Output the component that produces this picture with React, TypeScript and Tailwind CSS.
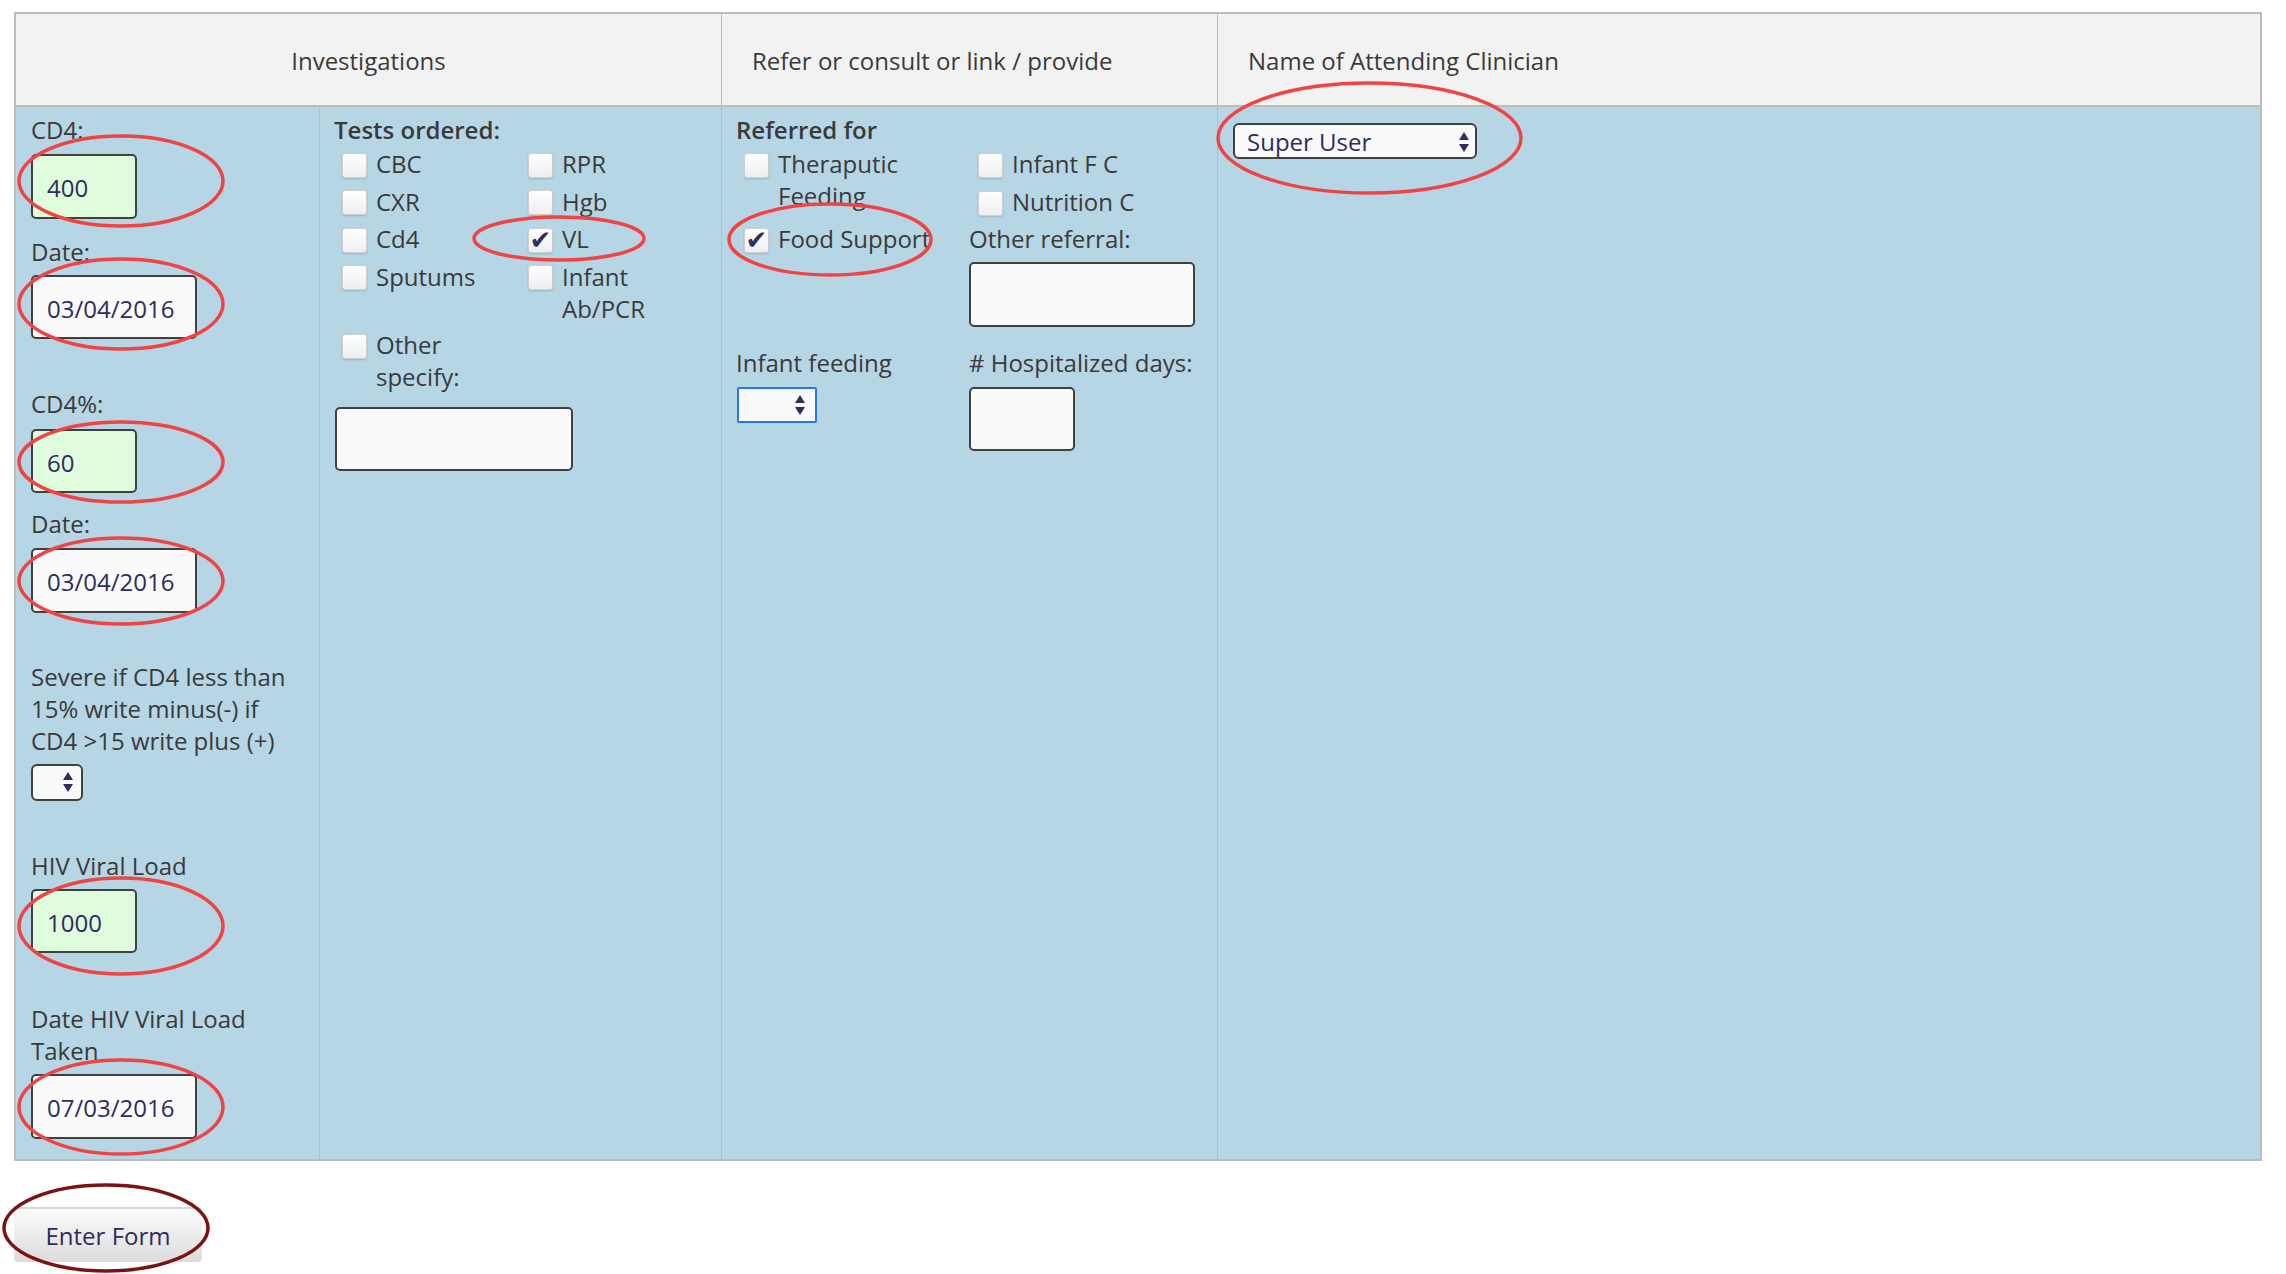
import React from "react";

const LABEL = "text-[24px] leading-[32px] text-[#3a3a3a]";

function Arrows() {
  return (
    <svg width="10" height="20" viewBox="0 0 10 20" className="shrink-0">
      <polygon points="5,0 10,8 0,8" fill="#2f2d63" />
      <polygon points="0,12 10,12 5,20" fill="#2f2d63" />
    </svg>
  );
}

function Box({ checked = false }: { checked?: boolean }) {
  return (
    <div className="mt-[4.5px] w-[25px] h-[25px] shrink-0 rounded-[3px] border border-[#cfcfcf] bg-gradient-to-b from-white to-[#eeeeee] shadow-[0_1px_2px_rgba(0,0,0,0.15)] flex items-center justify-center">
      {checked && (
        <span className="text-[#2f2d63] text-[26px] leading-none" style={{ fontFamily: "'DejaVu Sans', sans-serif" }}>
          ✔
        </span>
      )}
    </div>
  );
}

function Check({ label, checked = false }: { label: React.ReactNode; checked?: boolean }) {
  return (
    <div className="flex items-start gap-[9px]">
      <Box checked={checked} />
      <span className={LABEL}>{label}</span>
    </div>
  );
}

function Field({ value, w, green = false, cls = "" }: { value?: string; w: string; green?: boolean; cls?: string }) {
  return (
    <div
      className={`${w} ${cls} border-2 border-[#404040] rounded-[5px] flex items-center pl-[14px] pt-[4px] text-[24px] text-[#2e2b5f] ${
        green ? "bg-[#dffcdd]" : "bg-[#fafafa]"
      }`}
    >
      {value}
    </div>
  );
}

export default function App() {
  return (
    <div className="relative w-[2286px] h-[1274px] bg-white overflow-hidden" style={{ fontFamily: "'Open Sans', Lato, sans-serif" }}>
      <div className="pt-[12px] pl-[14px]">
        <div className="w-[2248px] border-2 border-[#bcbcbc]">
          {/* header */}
          <div className="grid grid-cols-[706px_496px_1fr] h-[93px] bg-[#f2f2f2] border-b-2 border-[#bcbcbc] text-[24px] text-[#3a3a3a]">
            <div className="border-r border-[#bcbcbc] flex items-center justify-center pt-[2px]">Investigations</div>
            <div className="border-r border-[#bcbcbc] flex items-center pl-[30px] pt-[2px]">Refer or consult or link / provide</div>
            <div className="flex items-center pl-[30px] pt-[2px]">Name of Attending Clinician</div>
          </div>
          {/* body */}
          <div className="grid grid-cols-[304px_402px_496px_1fr] h-[1052px] bg-[#b6d5e5]">
            {/* col 1 */}
            <div className="border-r border-[#bcbcbc] pl-[15px] pt-[7px] flex flex-col items-start">
              <div className={LABEL}>CD4:</div>
              <Field value="400" w="w-[106px]" cls="h-[65px] mt-[7.5px]" green />
              <div className={`${LABEL} mt-[17.5px]`}>Date:</div>
              <Field value="03/04/2016" w="w-[166px]" cls="h-[64px] mt-[6.5px]" />
              <div className={`${LABEL} mt-[49.5px]`}>CD4%:</div>
              <Field value="60" w="w-[106px]" cls="h-[64px] mt-[8.5px]" green />
              <div className={`${LABEL} mt-[15.5px]`}>Date:</div>
              <Field value="03/04/2016" w="w-[166px]" cls="h-[65px] mt-[7.5px]" />
              <div className={`${LABEL} mt-[48.5px]`}>
                Severe if CD4 less than
                <br />
                15% write minus(-) if
                <br />
                CD4 &gt;15 write plus (+)
              </div>
              <div className="mt-[6.5px] w-[52px] h-[37px] border-2 border-[#404040] rounded-[6px] bg-[#fafafa] flex items-center justify-end pr-[8px]">
                <Arrows />
              </div>
              <div className={`${LABEL} mt-[49.5px]`}>HIV Viral Load</div>
              <Field value="1000" w="w-[106px]" cls="h-[64px] mt-[6.5px]" green />
              <div className={`${LABEL} mt-[50.5px]`}>
                Date HIV Viral Load
                <br />
                Taken
              </div>
              <Field value="07/03/2016" w="w-[166px]" cls="h-[65px] mt-[6.5px]" />
            </div>
            {/* col 2 */}
            <div className="border-r border-[#bcbcbc] pl-[14px] pt-[7px] flex flex-col items-start">
              <div className={`${LABEL} font-semibold`}>Tests ordered:</div>
              <div className="mt-[2px] pl-[8px] grid grid-cols-[186px_1fr] gap-y-[5.5px]">
                <Check label="CBC" />
                <Check label="RPR" />
                <Check label="CXR" />
                <Check label="Hgb" />
                <Check label="Cd4" />
                <Check label="VL" checked />
                <Check label="Sputums" />
                <Check
                  label={
                    <>
                      Infant
                      <br />
                      Ab/PCR
                    </>
                  }
                />
              </div>
              <div className="mt-[4.5px] pl-[8px]">
                <Check
                  label={
                    <>
                      Other
                      <br />
                      specify:
                    </>
                  }
                />
              </div>
              <Field w="w-[238px]" cls="h-[64px] mt-[13.5px] ml-[1px]" />
            </div>
            {/* col 3 */}
            <div className="border-r border-[#bcbcbc] pl-[14px] pt-[7px] flex flex-col items-start">
              <div className={`${LABEL} font-semibold`}>Referred for</div>
              <div className="mt-[2px] grid grid-cols-[233px_1fr]">
                <div className="pl-[8px] flex flex-col">
                  <div className="h-[62.5px] overflow-hidden">
                    <Check
                      label={
                        <>
                          Theraputic
                          <br />
                          Feeding
                        </>
                      }
                    />
                  </div>
                  <div className="mt-[12.5px] whitespace-nowrap">
                    <Check label="Food Support" checked />
                  </div>
                </div>
                <div className="flex flex-col items-start">
                  <div className="pl-[9px]">
                    <Check label="Infant F C" />
                  </div>
                  <div className="pl-[9px] mt-[6px]">
                    <Check label="Nutrition C" />
                  </div>
                  <div className={`${LABEL} mt-[5px]`}>Other referral:</div>
                  <Field w="w-[226px]" cls="h-[65px] mt-[6.5px]" />
                </div>
              </div>
              <div className="mt-[20.5px] grid grid-cols-[233px_1fr]">
                <div className="flex flex-col items-start">
                  <div className={LABEL}>Infant feeding</div>
                  <div className="mt-[7.5px] ml-[1px] w-[80px] h-[36px] border-2 border-[#2678f0] rounded-[2px] bg-[#fafafa] flex items-center justify-end pr-[10px]">
                    <Arrows />
                  </div>
                </div>
                <div className="flex flex-col items-start">
                  <div className={`${LABEL} whitespace-nowrap`}># Hospitalized days:</div>
                  <Field w="w-[106px]" cls="h-[64px] mt-[7.5px]" />
                </div>
              </div>
            </div>
            {/* col 4 */}
            <div className="pl-[15px] pt-[16px]">
              <div className="w-[244px] h-[36px] border-2 border-[#404040] rounded-[6px] bg-[#fafafa] flex items-center justify-between pl-[12px] pr-[6px] pt-[1px] text-[24px] text-[#2e2b5f]">
                <span>Super User</span>
                <Arrows />
              </div>
            </div>
          </div>
        </div>
        <div className="mt-[46px] w-[188px] h-[55px] rounded-[4px] border-t-2 border-[#d6d6d6] bg-gradient-to-b from-[#fbfbfb] to-[#dcdcdc] flex items-center justify-center text-[24px] text-[#2e2b5f]">
          Enter Form
        </div>
      </div>

      <svg className="absolute inset-0 pointer-events-none" width="2286" height="1274">
        <g fill="none" stroke="#f04444" strokeWidth="3.5">
          <ellipse cx="121" cy="181" rx="102" ry="45" />
          <ellipse cx="121" cy="304" rx="102" ry="45" />
          <ellipse cx="121" cy="462" rx="102" ry="40" />
          <ellipse cx="121" cy="581" rx="102" ry="43" />
          <ellipse cx="121" cy="926" rx="102" ry="48" />
          <ellipse cx="121" cy="1107" rx="102" ry="47" />
          <ellipse cx="559" cy="238.5" rx="85" ry="21.5" />
          <ellipse cx="830" cy="239.5" rx="101" ry="35.5" />
          <ellipse cx="1369.5" cy="138" rx="151.5" ry="55" />
        </g>
        <ellipse cx="106" cy="1228" rx="102" ry="43" fill="none" stroke="#7b1313" strokeWidth="3.5" />
      </svg>
    </div>
  );
}
